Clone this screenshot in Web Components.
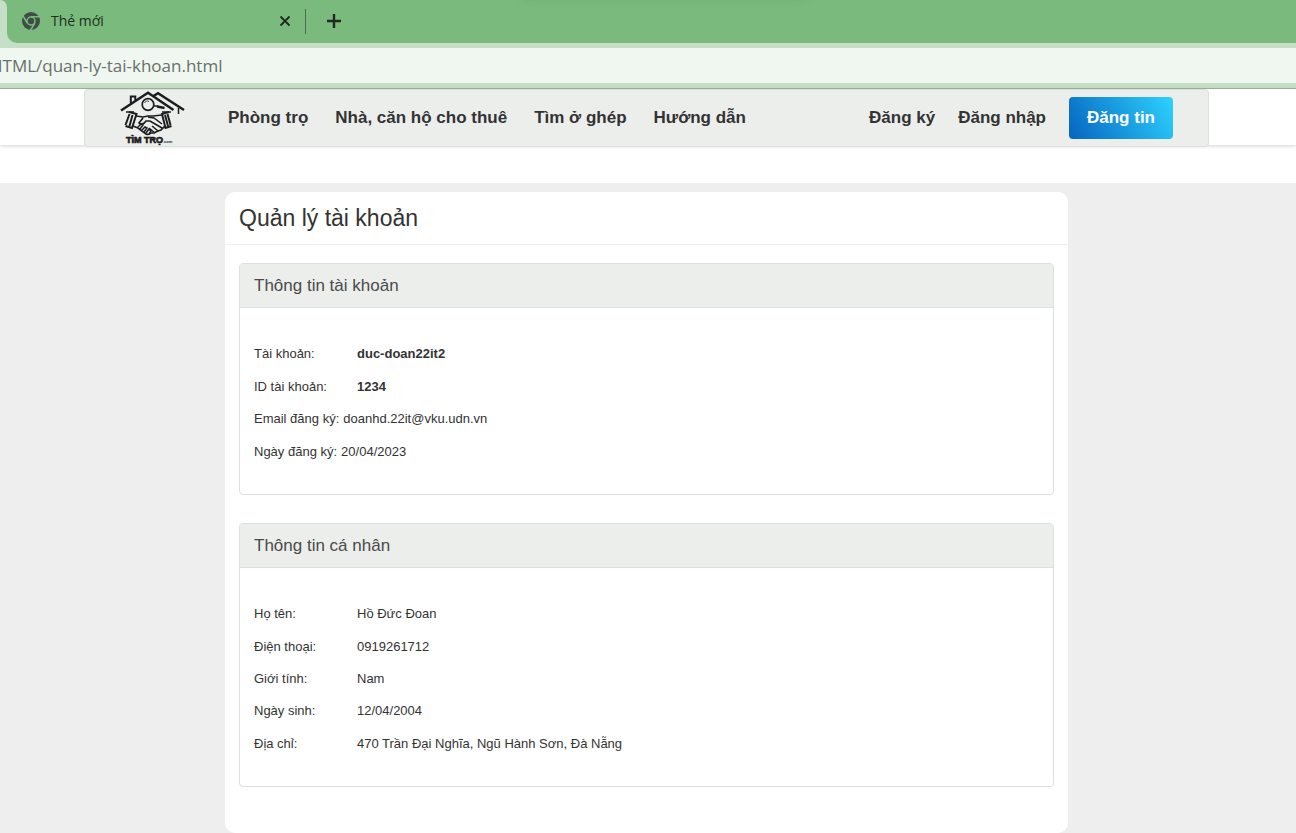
<!DOCTYPE html>
<html lang="vi">
<head>
<meta charset="utf-8">
<meta name="viewport" content="width=device-width, initial-scale=1">
<title>Quản lý tài khoản</title>
<style>
  body { margin: 0; background: #eee; color: #333; font-family: "Liberation Sans", Arial, sans-serif; font-size: 13px; }
</style>
</head>
<body>
<browser-bar tab-title="Thẻ mới" address="HTML/quan-ly-tai-khoan.html"></browser-bar>
<site-header></site-header>
<account-page heading="Quản lý tài khoản">
  <info-panel heading="Thông tin tài khoản">
    <info-row label="Tài khoản:"><b>duc-doan22it2</b></info-row>
    <info-row label="ID tài khoản:"><b>1234</b></info-row>
    <info-row inline label="Email đăng ký:">doanhd.22it@vku.udn.vn</info-row>
    <info-row inline label="Ngày đăng ký:">20/04/2023</info-row>
  </info-panel>
  <info-panel heading="Thông tin cá nhân" class="personal">
    <info-row label="Họ tên:">Hồ Đức Đoan</info-row>
    <info-row label="Điện thoại:">0919261712</info-row>
    <info-row label="Giới tính:">Nam</info-row>
    <info-row label="Ngày sinh:">12/04/2004</info-row>
    <info-row label="Địa chỉ:">470 Trần Đại Nghĩa, Ngũ Hành Sơn, Đà Nẵng</info-row>
  </info-panel>
</account-page>

<script>
class Base extends HTMLElement {
  connectedCallback() {
    if (this.shadowRoot) return;
    this.attachShadow({ mode: 'open' }).innerHTML = this.render();
  }
  attr(name) { return this.getAttribute(name) || ''; }
}

customElements.define('browser-bar', class extends Base {
  render() { return `
  <style>
    :host { display: block; background: #c5e0c6; font-family: "Open Sans", "Noto Sans", sans-serif; border-bottom: 1px solid #9fb6a1; }
    .strip { display: flex; height: 43px; overflow: hidden; background: linear-gradient(#7abb7d 0 50%, #c5e0c6 50%); }
    .active { width: 7px; background: #c5e0c6; border-top-right-radius: 8px; }
    .rest { flex: 1; display: flex; align-items: center; background: #7abb7d; border-bottom-left-radius: 10px; padding: 0 0 1px 14px; position: relative; }
    .rest::after { content: ""; position: absolute; top: -7px; left: 40%; width: 22%; height: 6px; box-shadow: 0 0 8px #2d6b3a30; }
    .title { flex: 0 0 226px; margin-left: 10px; font-size: 14px; line-height: 20px; color: #222c23; }
    svg { display: block; }
    button { border: 0; background: none; padding: 0; display: block; }
    .sep { width: 1px; height: 25px; background: #47704a; margin: 0 20px 0 12px; }
    .address { height: 35px; margin: 5px 0; background: #f0f7f1; overflow: hidden; display: flex; }
    input { flex: 1; min-width: 0; border: 0; outline: 0; background: none; padding: 0; margin-left: -10px; font: 17px/35px "Open Sans", "Noto Sans", sans-serif; color: #66706a; }
  </style>
  <div class="strip">
    <div class="active"></div>
    <div class="rest">
      <svg width="20" height="20" viewBox="0 0 20 20" aria-hidden="true">
        <circle cx="10" cy="10" r="9" fill="#414c49"/>
        <circle cx="10" cy="10" r="4" fill="none" stroke="#7abb7d" stroke-width="1.5"/>
        <path d="M10 5.7h9M6.2 12L2 4.8M13.8 12L9.4 19.5" stroke="#7abb7d" stroke-width="1.5"/>
      </svg>
      <span class="title">${this.attr('tab-title')}</span>
      <button aria-label="Đóng thẻ"><svg width="16" height="16" viewBox="0 0 16 16"><path d="M3.5 3.5l9 9M12.5 3.5l-9 9" stroke="#1e2922" stroke-width="1.8"/></svg></button>
      <span class="sep"></span>
      <button aria-label="Thẻ mới"><svg width="16" height="16" viewBox="0 0 16 16"><path d="M8 1v14M1 8h14" stroke="#1e2922" stroke-width="2.4"/></svg></button>
    </div>
  </div>
  <div class="address"><input type="text" aria-label="Địa chỉ trang" value="${this.attr('address')}"></div>`; }
});

customElements.define('site-logo', class extends Base {
  render() { return `
  <style>:host { display: block; } svg { display: block; }</style>
  <svg width="70" height="56" viewBox="0 0 70 56" role="img" aria-label="Tìm Trọ" fill="none" stroke="#1d1d1f" stroke-linejoin="miter">
    <path d="M4 20.500L31 2.800 56.500 20" stroke-width="2.500"/>
    <path d="M36.500 6L41 3.200 67 20" stroke-width="2.500"/>
    <path d="M13.800 13V6.500h4.500V10" stroke-width="2"/>
    <path d="M61.500 18v6" stroke-width="1.500"/>
    <circle cx="31" cy="14.500" r="5.800" stroke-width="1.700"/>
    <path d="M27.500 13c1-2 3-2.500 4.500-1.500" stroke-width=".8"/>
    <path d="M37 16h4" stroke-width="1.500"/>
    <path d="M40 16.500l7.500 1.500" stroke-width="2.600"/>
    <path d="M9 22h8M45 22h9" stroke-width="1.500"/>
    <path d="M12 22l7.500 2-4.500 14-6.500-2M12.500 24l-4 11M15.500 25l-3 11" stroke-width="2"/>
    <path d="M52 22l-7 2 3.500 14 6-2M50.500 24l3 11M48 25l3 11" stroke-width="2"/>
    <path d="M19 26l7 1 5-1 5 0 9-1M26 28l-4 5c2 2 5 1 7-2l4 0 12 7M16 36l5 2 8 6c2 1 4 0 5-1l3 0 4-2 3-1 3-3 2-1" stroke-width="1.700"/>
    <path d="M21 37l3-3 2 1-3 4M25 40l3-3 2 1-3 4M29 43l3-4 2 2-2 3M35 36l6 5M32 38l6 5M31 27l6 1 8 6" stroke-width="1.500"/>
    <g fill="#1d1d1f" stroke="none" font-family="Liberation Sans, Arial, sans-serif" font-weight="700">
      <text x="9" y="53" font-size="9" stroke="#1d1d1f" stroke-width=".7">TÌM TRỌ</text>
      <text x="46" y="53" font-size="4">.com</text>
    </g>
  </svg>`; }
});

customElements.define('site-header', class extends Base {
  render() { return `
  <style>
    :host { display: block; background: #fff; padding-bottom: 38px; }
    header { height: 56px; padding-right: 3px; background: #fff; box-shadow: 0 1px 4px #0000002e; }
    .box { box-sizing: border-box; max-width: 1125px; height: 58px; margin: 0 auto; padding: 0 35px 0 32px; display: flex; align-items: center; background: #eceeec; border: 1px solid #dbdfde; border-radius: 4px; }
    nav { display: flex; gap: 27px; margin-left: 41px; flex: 1; }
    .user { display: flex; align-items: center; gap: 23px; }
    a { color: #333; text-decoration: none; font-size: 17px; line-height: 24px; font-weight: 700; white-space: nowrap; }
    a.post { color: #fff; padding: 9px 18px; border-radius: 4px; background: linear-gradient(60deg, #0664c0, #2dd2ff); }
  </style>
  <header><div class="box">
    <site-logo></site-logo>
    <nav><a href="#">Phòng trọ</a><a href="#">Nhà, căn hộ cho thuê</a><a href="#">Tìm ở ghép</a><a href="#">Hướng dẫn</a></nav>
    <div class="user"><a href="#">Đăng ký</a><a href="#">Đăng nhập</a><a class="post" href="#">Đăng tin</a></div>
  </div></header>`; }
});

customElements.define('account-page', class extends Base {
  render() { return `
  <style>
    :host { display: block; padding: 9px 3px 0 0; }
    main { max-width: 843px; margin: 0 auto; background: #fff; border-radius: 10px; overflow: hidden; }
    h1 { margin: 0; padding: 10px 14px; font-size: 23px; line-height: 32px; font-weight: 400; border-bottom: 1px solid #eee; }
    .body { display: grid; gap: 28px; padding: 18px 14px 46px; }
  </style>
  <main><h1>${this.attr('heading')}</h1><div class="body"><slot></slot></div></main>`; }
});

customElements.define('info-panel', class extends Base {
  render() { return `
  <style>
    :host { display: block; border: 1px solid #dbdfde; border-radius: 4px; overflow: hidden; }
    h2 { margin: 0; padding: 10px 14px; font-size: 17px; line-height: 23px; font-weight: 400; color: #4a4a4a; background: #eceeec; border-bottom: 1px solid #dbdfde; }
    .rows { display: grid; grid-auto-rows: 1fr; align-items: center; min-height: 130px; padding: 30px 14px 26px; }
    :host(.personal) .rows { min-height: 162px; }
  </style>
  <section><h2>${this.attr('heading')}</h2><div class="rows"><slot></slot></div></section>`; }
});

customElements.define('info-row', class extends Base {
  render() { return `
  <style>
    :host { display: flex; line-height: 20px; }
    .label { flex: 0 0 103px; }
    :host([inline]) { gap: 4px; }
    :host([inline]) .label { flex-basis: auto; }
  </style>
  <span class="label">${this.attr('label')}</span><span><slot></slot></span>`; }
});
</script>
</body>
</html>
